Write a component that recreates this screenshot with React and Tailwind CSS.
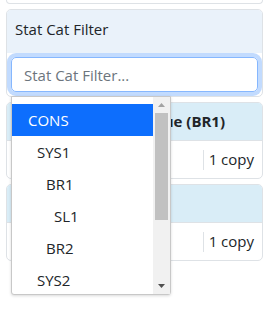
import React from 'react';

const options = [
  { label: 'CONS', indent: 0, active: true },
  { label: 'SYS1', indent: 1 },
  { label: 'BR1', indent: 2 },
  { label: 'SL1', indent: 3 },
  { label: 'BR2', indent: 2 },
  { label: 'SYS2', indent: 1 },
];

const indentClass = ['pl-[16px]', 'pl-[25px]', 'pl-[34px]', 'pl-[42px]'];

const CopyCard = ({ title }) => (
  <div className="mt-[5px] border border-[#dee2e6] rounded-[5px] overflow-hidden">
    <div className="h-[38px] bg-[#d9edf7] border-b border-[#dee2e6] px-[8px] flex items-center font-bold whitespace-nowrap overflow-hidden">
      {title}
    </div>
    <div className="h-[37px] flex items-center justify-end pr-[8px]">
      <span className="border-l border-[#dee2e6] h-[20px] mr-[5px]" />
      <span>1 copy</span>
    </div>
  </div>
);

export default function App() {
  return (
    <div className="relative w-[279px] h-[325px] bg-white overflow-hidden text-[15px] text-[#212529] font-['Open_Sans',sans-serif]">
      <div className="ml-[6px] w-[257px]">
        <div className="h-[4px] border border-t-0 border-[#dee2e6] rounded-b-[5px]" />

        <div className="mt-[5px] border border-[#dee2e6] rounded-[5px] overflow-hidden">
          <div className="h-[43px] bg-[#eaf2fa] px-[8px] pt-[8px] leading-[22px]">Stat Cat Filter</div>
          <div className="p-[4px]">
            <input
              className="w-full h-[35px] border border-[#86b7fe] rounded-[5px] px-[12px] outline-none shadow-[0_0_0_4px_rgba(13,110,253,0.25)] placeholder:text-[#6c757d]"
              placeholder="Stat Cat Filter..."
            />
          </div>
        </div>

        <CopyCard title="Genre  Local Catalogue (BR1)" />
        <CopyCard title="Item (BR2)" />
      </div>

      {/* open dropdown list */}
      <div className="absolute left-[11px] top-[96px] w-[160px] h-[199px] bg-white border border-[#c8c8c8] rounded-b-[3px] shadow-[0_1px_3px_rgba(0,0,0,0.15)] flex">
        <div className="flex-1 pt-[7px]">
          {options.map((o) => (
            <div
              key={o.label}
              className={`h-[32px] flex items-center ${indentClass[o.indent]} ${o.active ? 'bg-[#0d6efd] text-white' : ''}`}
            >
              {o.label}
            </div>
          ))}
        </div>
        <div className="w-[17px] bg-[#f1f1f1] flex flex-col items-center">
          <div className="h-[16px] flex items-center justify-center">
            <svg width="7" height="4" viewBox="0 0 7 4"><path d="M0 4 L3.5 0 L7 4 Z" fill="#a3a3a3" /></svg>
          </div>
          <div className="w-[13px] h-[107px] bg-[#c1c1c1]" />
          <div className="flex-1" />
          <div className="h-[17px] flex items-center justify-center">
            <svg width="7" height="4" viewBox="0 0 7 4"><path d="M0 0 L7 0 L3.5 4 Z" fill="#505050" /></svg>
          </div>
        </div>
      </div>
    </div>
  );
}
